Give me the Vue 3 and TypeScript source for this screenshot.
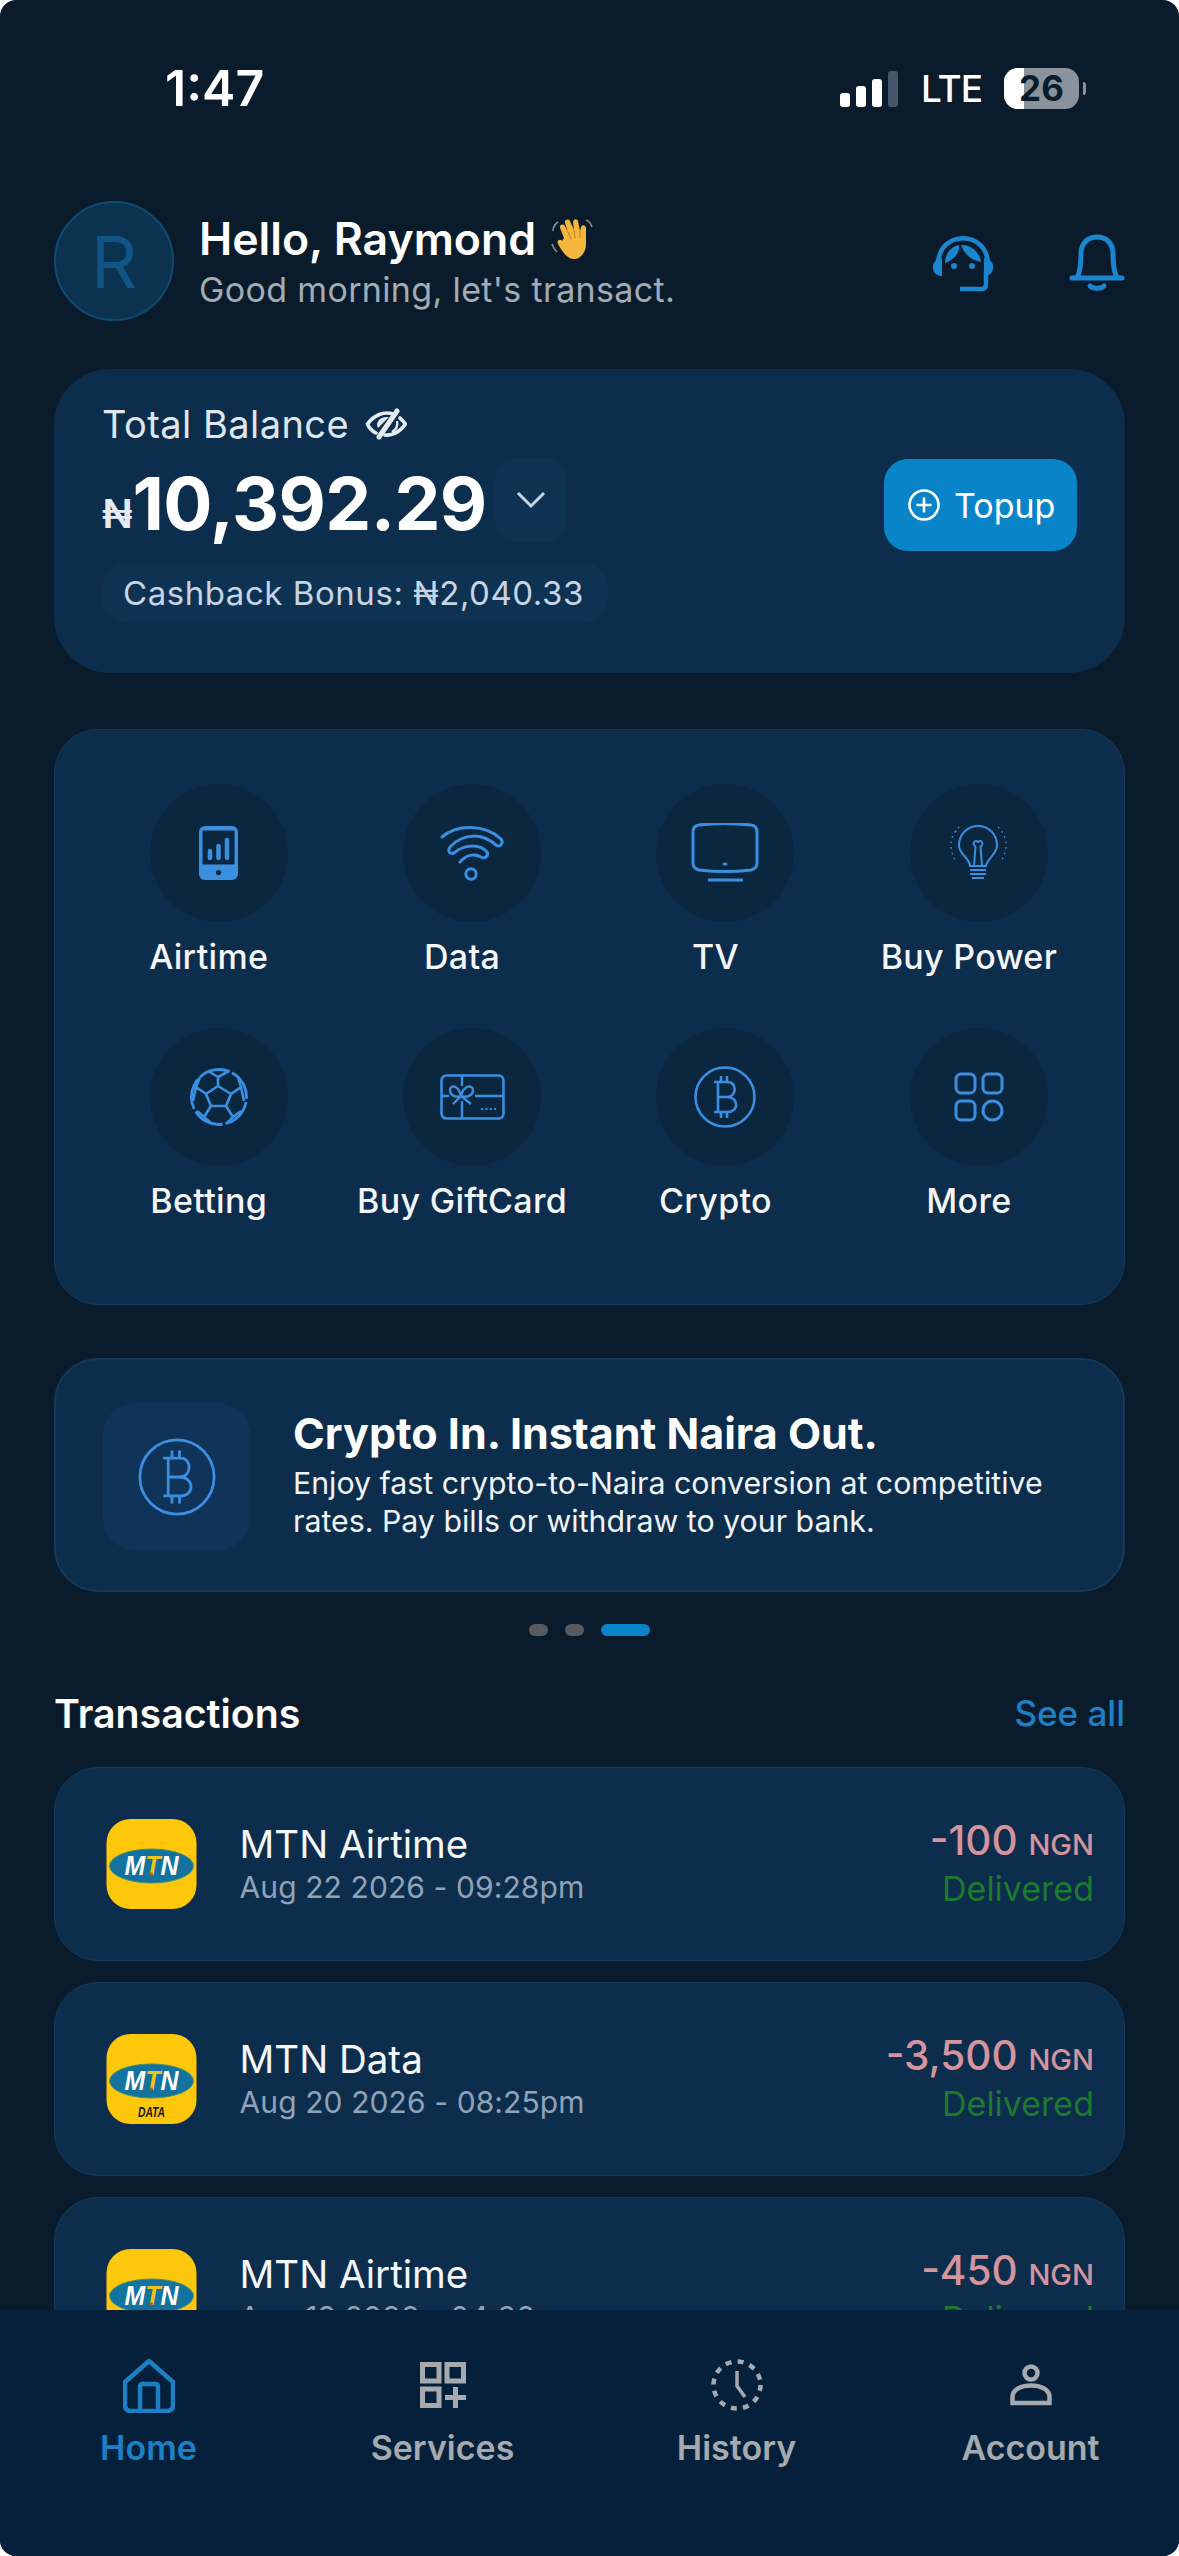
<script setup lang="ts">
interface Service {
  label: string;
  icon: string;
}

interface Transaction {
  name: string;
  date: string;
  amount: string;
  data?: boolean;
}

const services: Service[] = [
  { label: "Airtime", icon: "airtime" },
  { label: "Data", icon: "data" },
  { label: "TV", icon: "tv" },
  { label: "Buy Power", icon: "power" },
  { label: "Betting", icon: "betting" },
  { label: "Buy GiftCard", icon: "gift" },
  { label: "Crypto", icon: "crypto" },
  { label: "More", icon: "more" },
];

const transactions: Transaction[] = [
  { name: "MTN Airtime", date: "Aug 22 2026 - 09:28pm", amount: "-100" },
  { name: "MTN Data", date: "Aug 20 2026 - 08:25pm", amount: "-3,500", data: true },
  { name: "MTN Airtime", date: "Aug 19 2026 - 04:36pm", amount: "-450" },
];
</script>

<template>
  <div class="screen">
    <div class="status">
      <span class="time">1:47</span>
      <div class="status-right">
        <div class="signal">
          <i style="height: 14px"></i>
          <i style="height: 21px"></i>
          <i style="height: 28px"></i>
          <i class="off" style="height: 36px"></i>
        </div>
        <span class="lte">LTE</span>
        <div class="battery">
          <div class="battery-fill"></div>
          <span>26</span>
        </div>
        <div class="battery-nub"></div>
      </div>
    </div>

    <header class="header">
      <div class="avatar">R</div>
      <div class="greeting">
        <div class="hello">
          Hello, Raymond
          <svg class="wave" viewBox="0 0 44 44" width="44" height="44">
            <path d="M3 14 C3 10 5 7 8 5 M2 27 C3 30 5 33 7 35" fill="none" stroke="#8b8f8c" stroke-width="1.6" />
            <path d="M36 3 C39 4 41 7 42 10" fill="none" stroke="#8b8f8c" stroke-width="1.6" />
            <path
              d="M14 21 L10 11 C9 8 13 6 15 9 L18 15 L15 6 C14 3 18 1 20 4 L24 13 L23 5 C23 2 27 1 28 4 L30 14 L31 10 C32 7 36 8 36 11 L36 24 C37 34 31 43 23 42 C16 41 12 34 8 27 C6 24 10 21 12 24 Z"
              fill="#f4b63d"
            />
            <path d="M18 15 L21 22 M24 13 L25 21 M30 14 L30 21" fill="none" stroke="#c98a1f" stroke-width="1.3" />
          </svg>
        </div>
        <div class="sub">Good morning, let's transact.</div>
      </div>
      <div class="header-icons">
        <svg viewBox="0 0 62 56" width="62" height="56" class="support">
          <path d="M6 30 C5 -7 57 -7 56 30" fill="none" stroke="#1a86cf" stroke-width="4.5" />
          <path d="M10 22 C3 23 0 28 1 33 C2 38 6 40 10 40 Z" fill="#1a86cf" />
          <path d="M52 22 C59 23 62 28 61 33 C60 38 56 40 52 40 Z" fill="#1a86cf" />
          <path d="M28 53 H50 C53 53 54 51 54 48 V36" fill="none" stroke="#1a86cf" stroke-width="4.5" />
          <path d="M13 27 C13 17 20 10 27 9 C28 17 22 24 13 27 Z" fill="#1a86cf" />
          <path d="M29 9 C37 8 48 15 49 26 C40 25 33 19 29 9 Z" fill="#1a86cf" />
          <circle cx="22" cy="30" r="3" fill="#1a86cf" />
          <circle cx="40" cy="30" r="3" fill="#1a86cf" />
        </svg>
        <svg viewBox="0 0 56 60" width="56" height="60" class="bell">
          <path
            d="M3 44 H53 M8 44 C12 36 12 28 12 20 C12 9 19 3 28 3 C37 3 44 9 44 20 C44 28 44 36 48 44"
            fill="none"
            stroke="#1a86cf"
            stroke-width="5"
            stroke-linecap="round"
          />
          <path d="M21 52 C24 55 32 55 35 52" fill="none" stroke="#1a86cf" stroke-width="5" stroke-linecap="round" />
        </svg>
      </div>
    </header>

    <section class="balance">
      <div class="balance-left">
        <div class="balance-label">
          Total Balance
          <svg viewBox="0 0 42 32" width="42" height="32">
            <path d="M2.5 16 C9 7 19 3 28 6 M35 10 C37 12 39 14 40.5 16 C35 24 27 28 20 27 M2.5 16 C4 20 7 23 11 25" fill="none" stroke="#e6ebf2" stroke-width="3.6" stroke-linecap="round" />
            <path d="M32 3 L14 29" fill="none" stroke="#e6ebf2" stroke-width="5" stroke-linecap="round" />
            <path d="M13 20 C10 14 15 8 24 9 Z" fill="#e6ebf2" />
            <path d="M27 24 C32 21 33 17 32 13" fill="none" stroke="#e6ebf2" stroke-width="2.4" />
          </svg>
        </div>
        <div class="amount-row">
          <span class="naira">₦</span><span class="amount">10,392.29</span>
          <div class="chevron">
            <svg viewBox="0 0 30 18" width="30" height="18">
              <path d="M2 2 L15 15 L28 2" fill="none" stroke="#c8d4e4" stroke-width="3" />
            </svg>
          </div>
        </div>
        <div class="cashback">Cashback Bonus: ₦2,040.33</div>
      </div>
      <button class="topup">
        <svg viewBox="0 0 32 32" width="32" height="32">
          <circle cx="16" cy="16" r="14.5" fill="none" stroke="#fff" stroke-width="2.6" />
          <path d="M16 8.5 V23.5 M8.5 16 H23.5" stroke="#fff" stroke-width="2.6" />
        </svg>
        Topup
      </button>
    </section>

    <section class="services">
      <div v-for="s in services" :key="s.label" class="service">
        <div class="service-icon">
          <svg v-if="s.icon === 'airtime'" viewBox="0 0 39 54" width="39" height="54">
            <rect width="39" height="54" rx="6" fill="#3a8fe0" />
            <rect x="3.5" y="4.5" width="32" height="34" rx="1" fill="#0b2740" />
            <path d="M11 32 V25 M19.5 32 V20 M28 32 V14" stroke="#3a8fe0" stroke-width="4.5" stroke-linecap="round" />
            <circle cx="19.5" cy="46.5" r="2.6" fill="#0b2740" />
          </svg>
          <svg v-else-if="s.icon === 'data'" viewBox="0 0 64 56" width="64" height="56">
            <path
              d="M2 12 C17 -1 45 -1 61 14 C64 18 60 23 56 20 C42 8 24 8 11 21 C7 25 9 30 14 28 C24 19 40 19 47 27 C49 31 45 34 41 32 C34 28 26 30 20 37"
              fill="none"
              stroke="#3a8fe0"
              stroke-width="3"
              stroke-linecap="round"
            />
            <circle cx="31" cy="49" r="5.2" fill="none" stroke="#3a8fe0" stroke-width="3" />
          </svg>
          <svg v-else-if="s.icon === 'tv'" viewBox="0 0 68 60" width="68" height="60">
            <path
              d="M8 2 C25 0 43 0 60 2 C64 2.5 66 5 66 9 V40 C66 44 64 46 60 47 C43 49 25 49 8 47 C4 46 2 44 2 40 V9 C2 5 4 2.5 8 2 Z"
              fill="none"
              stroke="#3a8fe0"
              stroke-width="3"
            />
            <ellipse cx="34" cy="41" rx="2.5" ry="1.5" fill="#3a8fe0" />
            <path d="M17 57 H52" stroke="#3a8fe0" stroke-width="3" />
          </svg>
          <svg v-else-if="s.icon === 'power'" viewBox="0 0 57 56" width="57" height="56">
            <path
              d="M20 41 C20 33 9 30 9 20 A19 19 0 0 1 47 20 C47 30 37 33 36 41 Z M20 45 H36 M20 49 H36 M22 53 H34 M24 41 L25.5 22 C22 19 24 16 26 16 C27 16 28 17 28 18 C28 17 29 16 30 16 C32 16 34 19 30.5 22 L32 41"
              fill="none"
              stroke="#3a8fe0"
              stroke-width="2"
            />
            <path
              d="M9 2 C3 8 1 14 1 20 C1 26 3 32 7 38 M5 7 C6 6 7 5 8 4 M48 2 C54 8 56 14 56 20 C56 26 54 32 50 38"
              fill="none"
              stroke="#3a8fe0"
              stroke-width="1.4"
              stroke-dasharray="1.6 4"
            />
          </svg>
          <svg v-else-if="s.icon === 'betting'" viewBox="0 0 60 60" width="60" height="60">
            <circle cx="30" cy="30" r="27.5" fill="none" stroke="#3a8fe0" stroke-width="2.8" stroke-dasharray="31.6 3" transform="rotate(-62 30 30)" />
            <path
              d="M29 19 L42 27 L37 39 H22 L17 27 Z M29 19 V10 M19 4 L29 10 L40 4 M42 27 L52 20 L55 34 M52 20 L49 10 M17 27 L7 20 L4 34 M7 20 L11 10 M37 39 L44 50 L38 56 M44 50 L52 44 M22 39 L15 50 L22 56 M15 50 L8 44"
              fill="none"
              stroke="#3a8fe0"
              stroke-width="2.6"
              stroke-linejoin="round"
            />
          </svg>
          <svg v-else-if="s.icon === 'gift'" viewBox="0 0 65 46" width="65" height="46">
            <rect x="1.5" y="1.5" width="62" height="43" rx="5" fill="none" stroke="#3a8fe0" stroke-width="2.6" />
            <path
              d="M22 1.5 V12 M22 27 V44.5 M1.5 22 H9 M35 22 H63.5 M21 22 C15 24 10 21 10 16 C10 11 18 10 21 22 C24 10 33 11 33 16 C33 21 28 24 21 22 M21 22 L13 30 M21 22 L31 30"
              fill="none"
              stroke="#3a8fe0"
              stroke-width="2.4"
            />
            <path d="M41 35 H56" stroke="#3a8fe0" stroke-width="2" stroke-dasharray="2 2.4" />
          </svg>
          <svg v-else-if="s.icon === 'crypto'" viewBox="0 0 62 62" width="62" height="62">
            <circle cx="31" cy="31" r="29.5" fill="none" stroke="#3a8fe0" stroke-width="2.6" />
            <path
              d="M24 16 V46 M20 16 H34 C43 16 43 31 33 31 H24 M33 31 C45 31 45 46 34 46 H20 M27 16 V10 M33 16 V10 M27 46 V52 M33 46 V52"
              fill="none"
              stroke="#3a8fe0"
              stroke-width="2.6"
            />
          </svg>
          <svg v-else viewBox="0 0 50 50" width="50" height="50">
            <rect x="2" y="2" width="19" height="19" rx="5" fill="none" stroke="#3a8fe0" stroke-width="3" />
            <rect x="29" y="2" width="19" height="19" rx="5" fill="none" stroke="#3a8fe0" stroke-width="3" />
            <rect x="2" y="29" width="19" height="19" rx="5" fill="none" stroke="#3a8fe0" stroke-width="3" />
            <circle cx="38.5" cy="38.5" r="9.5" fill="none" stroke="#3a8fe0" stroke-width="3" />
          </svg>
        </div>
        <div class="service-label">{{ s.label }}</div>
      </div>
    </section>

    <section class="promo">
      <div class="promo-icon">
        <svg viewBox="0 0 62 62" width="78" height="78">
          <circle cx="31" cy="31" r="29.5" fill="none" stroke="#3a8fe0" stroke-width="2.2" />
          <path
            d="M24 16 V46 M20 16 H34 C43 16 43 31 33 31 H24 M33 31 C45 31 45 46 34 46 H20 M27 16 V10 M33 16 V10 M27 46 V52 M33 46 V52"
            fill="none"
            stroke="#3a8fe0"
            stroke-width="2.2"
          />
        </svg>
      </div>
      <div class="promo-text">
        <div class="promo-title">Crypto In. Instant Naira Out.</div>
        <div class="promo-body">Enjoy fast crypto-to-Naira conversion at competitive rates. Pay bills or withdraw to your bank.</div>
      </div>
    </section>

    <div class="dots">
      <i></i>
      <i></i>
      <i class="active"></i>
    </div>

    <div class="tx-head">
      <span class="tx-title">Transactions</span>
      <span class="see-all">See all</span>
    </div>

    <div class="tx-list">
      <div v-for="(t, i) in transactions" :key="i" class="tx">
        <svg class="logo" viewBox="0 0 90 90" width="91" height="90">
          <rect width="90" height="90" rx="24" fill="#fdc80c" />
          <ellipse cx="45" cy="47" rx="42" ry="17" fill="#12739f" stroke="#4c8f76" stroke-width="1" />
          <text x="45" y="56" text-anchor="middle" textLength="54" lengthAdjust="spacingAndGlyphs" class="logo-text">M<tspan fill="#f2c21b">T</tspan>N</text>
          <circle cx="45" cy="55" r="1.4" fill="#c8452f" />
          <text v-if="t.data" x="45" y="83" text-anchor="middle" textLength="27" lengthAdjust="spacingAndGlyphs" class="logo-data">DATA</text>
        </svg>
        <div class="tx-info">
          <div class="tx-name">{{ t.name }}</div>
          <div class="tx-date">{{ t.date }}</div>
        </div>
        <div class="tx-right">
          <div class="tx-amount">{{ t.amount }} <small>NGN</small></div>
          <div class="tx-status">Delivered</div>
        </div>
      </div>
    </div>

    <nav class="tabbar">
      <div class="tab active">
        <div class="tab-icon">
          <svg viewBox="0 0 52 55" width="52" height="55">
            <path d="M26 3 L50 24 V47 Q50 53 44 53 H8 Q2 53 2 47 V24 Z M17 53 V29 Q17 26 20 26 H32 Q35 26 35 29 V53" fill="none" stroke="#1e80c4" stroke-width="4.5" stroke-linejoin="round" />
          </svg>
        </div>
        <span>Home</span>
      </div>
      <div class="tab">
        <div class="tab-icon">
          <svg viewBox="0 0 46 46" width="46" height="46">
            <path d="M2.5 2.5 H19 V19 H2.5 Z M27 2.5 H43.5 V19 H27 Z M2.5 27 H19 V43.5 H2.5 Z M35.5 25 V46 M25 35.5 H46" fill="none" stroke="#a6a9ae" stroke-width="5" />
          </svg>
        </div>
        <span>Services</span>
      </div>
      <div class="tab">
        <div class="tab-icon">
          <svg viewBox="0 0 52 52" width="52" height="52">
            <circle cx="26" cy="26" r="23.5" fill="none" stroke="#a6a9ae" stroke-width="4.5" stroke-dasharray="6 6.3" />
            <path d="M26 12 V27 L34 38" fill="none" stroke="#a6a9ae" stroke-width="3.5" />
          </svg>
        </div>
        <span>History</span>
      </div>
      <div class="tab">
        <div class="tab-icon">
          <svg viewBox="0 0 42 42" width="42" height="42">
            <circle cx="21" cy="9" r="6.5" fill="none" stroke="#a6a9ae" stroke-width="4.5" />
            <path d="M2.5 39 V33 C2.5 25 12 21.5 21 21.5 C30 21.5 39.5 25 39.5 33 V39 Z" fill="none" stroke="#a6a9ae" stroke-width="4.5" />
          </svg>
        </div>
        <span>Account</span>
      </div>
    </nav>
  </div>
</template>

<style scoped>
.screen {
  position: relative;
  width: 1179px;
  height: 2556px;
  box-sizing: border-box;
  padding: 0 54px;
  overflow: hidden;
  border-radius: 16px;
  background: #0a1c2b;
  color: #fff;
  font-family: Inter, "Liberation Sans", sans-serif;
}

.status {
  display: flex;
  align-items: center;
  justify-content: space-between;
  height: 176px;
  padding: 0 39px 0 111px;
  margin-bottom: 24px;
}

.time {
  font-size: 50px;
  font-weight: 600;
}

.status-right {
  display: flex;
  align-items: center;
}

.signal {
  display: flex;
  align-items: flex-end;
  gap: 6px;
  margin-top: 2px;
  margin-right: 23px;
}

.signal i {
  width: 10px;
  border-radius: 3px;
  background: #fff;
}

.signal i.off {
  background: #46566a;
}

.lte {
  font-size: 37px;
  font-weight: 500;
  letter-spacing: -1px;
  margin-right: 22px;
}

.battery {
  position: relative;
  display: flex;
  align-items: center;
  justify-content: center;
  width: 75px;
  height: 41px;
  border-radius: 14px;
  overflow: hidden;
  background: #8a929c;
  color: #0b1c2b;
  font-size: 35px;
  font-weight: 700;
}

.battery span {
  position: relative;
}

.battery-fill {
  position: absolute;
  left: 0;
  top: 0;
  bottom: 0;
  width: 20px;
  background: #fff;
}

.battery-nub {
  width: 3px;
  height: 13px;
  margin-left: 4px;
  border-radius: 0 3px 3px 0;
  background: #8a929c;
}

.header {
  display: flex;
  align-items: center;
  height: 122px;
  margin-bottom: 47px;
}

.avatar {
  display: flex;
  align-items: center;
  justify-content: center;
  width: 120px;
  height: 120px;
  box-sizing: border-box;
  border: 2px solid #0f4a73;
  border-radius: 50%;
  background: #0b3350;
  color: #0f5585;
  font-size: 72px;
  margin-right: 25px;
}

.greeting {
  flex: 1;
}

.hello {
  display: flex;
  align-items: center;
  gap: 14px;
  height: 52px;
  font-size: 44.6px;
  font-weight: 600;
}

.sub {
  margin-top: 4px;
  font-size: 34px;
  letter-spacing: 0.35px;
  color: #a3abb5;
}

.header-icons {
  display: flex;
  align-items: center;
  gap: 75px;
}

.support,
.bell {
  display: block;
  margin-top: 6px;
}

.balance {
  display: flex;
  align-items: flex-start;
  justify-content: space-between;
  box-sizing: border-box;
  height: 304px;
  padding: 36px 48px 0 48px;
  border-radius: 56px;
  background: #0d2d4c;
}

.balance-label {
  display: flex;
  align-items: center;
  gap: 16px;
  height: 38px;
  font-size: 38px;
  letter-spacing: 0.45px;
  color: #dfe6ef;
}

.amount-row {
  display: flex;
  align-items: center;
  height: 84px;
  margin-top: 15px;
}

.naira {
  font-size: 40px;
  font-weight: 600;
  margin-top: 26px;
  color: #e6ebf2;
}

.amount {
  padding-top: 7px;
  font-size: 73px;
  font-weight: 700;
  letter-spacing: -0.6px;
}

.chevron {
  display: flex;
  align-items: center;
  justify-content: center;
  width: 72px;
  height: 84px;
  margin-left: 8px;
  border-radius: 20px;
  background: #0e3252;
}

.cashback {
  display: inline-block;
  height: 60px;
  line-height: 60px;
  margin-top: 21px;
  padding: 0 24px 0 21px;
  border-radius: 24px;
  background: #0e3252;
  color: #c8d4e4;
  font-size: 33px;
  letter-spacing: 0.55px;
}

.topup {
  display: flex;
  align-items: center;
  gap: 14px;
  width: 193px;
  height: 92px;
  margin-top: 54px;
  padding: 0 0 0 24px;
  border: none;
  border-radius: 24px;
  background: #0a84c8;
  color: #fff;
  font-family: inherit;
  font-size: 34px;
}

.services {
  display: grid;
  grid-template-columns: repeat(4, 253.4px);
  grid-auto-rows: 244px;
  box-sizing: border-box;
  height: 576px;
  margin-top: 56px;
  padding: 54px 0 0 27px;
  border: 1px solid #123a5c;
  border-radius: 44px;
  background: #0d2d4c;
}

.service {
  display: flex;
  flex-direction: column;
  align-items: center;
}

.service-icon {
  display: flex;
  align-items: center;
  justify-content: center;
  width: 138px;
  height: 138px;
  margin-left: 20px;
  border-radius: 50%;
  background: #0b2740;
}

.service-label {
  margin-top: 14px;
  font-size: 34px;
  font-weight: 500;
  letter-spacing: 0.3px;
  line-height: 42px;
  color: #f4f6f9;
}

.promo {
  display: flex;
  align-items: flex-start;
  box-sizing: border-box;
  height: 234px;
  margin-top: 53px;
  padding: 43px 0 0 47px;
  border: 2px solid #15395a;
  border-radius: 44px;
  background: #0d2d4c;
}

.promo-icon {
  display: flex;
  align-items: center;
  justify-content: center;
  flex: none;
  width: 147px;
  height: 147px;
  border-radius: 32px;
  background: #10335a;
}

.promo-text {
  margin: 5px 0 0 43px;
  width: 775px;
}

.promo-title {
  font-size: 43px;
  font-weight: 700;
  line-height: 50px;
}

.promo-body {
  margin-top: 6px;
  font-size: 30.3px;
  line-height: 38px;
  color: #f0f3f7;
}

.dots {
  display: flex;
  justify-content: center;
  gap: 17px;
  margin-top: 32px;
}

.dots i {
  width: 19px;
  height: 12px;
  border-radius: 6px;
  background: #555a60;
}

.dots i.active {
  width: 49px;
  background: #0a84c8;
}

.tx-head {
  display: flex;
  align-items: center;
  justify-content: space-between;
  height: 60px;
  margin-top: 47px;
}

.tx-title {
  font-size: 39.3px;
  font-weight: 600;
}

.see-all {
  font-size: 35px;
  font-weight: 500;
  color: #1e80c4;
}

.tx-list {
  display: flex;
  flex-direction: column;
  gap: 21px;
  margin-top: 24px;
}

.tx {
  display: flex;
  align-items: center;
  flex: none;
  box-sizing: border-box;
  height: 194px;
  padding: 0 30px 0 51px;
  border: 1px solid #123a5c;
  border-radius: 44px;
  background: #0d2d4c;
}

.logo {
  flex: none;
}

.logo-text {
  font-family: "Liberation Sans", sans-serif;
  font-size: 27px;
  font-weight: 700;
  font-style: italic;
  fill: #fff;
}

.logo-data {
  font-family: "Liberation Sans", sans-serif;
  font-size: 15px;
  font-weight: 700;
  font-style: italic;
  fill: #1a1a10;
}

.tx-info {
  flex: 1;
  margin-left: 42.5px;
}

.tx-name {
  margin-top: -2px;
  font-size: 38.5px;
  line-height: 46px;
  color: #f4f6f9;
}

.tx-date {
  margin-top: 1px;
  font-size: 30px;
  letter-spacing: 0.1px;
  line-height: 38px;
  color: #8fa3b8;
}

.tx-right {
  text-align: right;
}

.tx-amount {
  font-size: 40.5px;
  font-weight: 500;
  line-height: 46px;
  color: #d4949e;
}

.tx-amount small {
  font-size: 29px;
}

.tx-status {
  font-size: 34px;
  line-height: 42px;
  color: #1c7a2f;
}

.tabbar {
  position: absolute;
  left: 0;
  right: 0;
  bottom: 0;
  display: grid;
  grid-template-columns: repeat(4, 294px);
  justify-content: center;
  box-sizing: border-box;
  height: 246px;
  padding-top: 45px;
  background: #04203a;
}

.tab {
  display: flex;
  flex-direction: column;
  align-items: center;
  height: 120px;
  color: #a6a9ae;
  font-size: 34px;
  font-weight: 600;
}

.tab-icon {
  display: flex;
  align-items: center;
  justify-content: center;
  height: 60px;
  margin-bottom: 12px;
}

.tab.active {
  color: #1e80c4;
}

.tab span {
  line-height: 42px;
}
</style>

<style>
html,
body {
  margin: 0;
  background: #fff;
}
</style>
